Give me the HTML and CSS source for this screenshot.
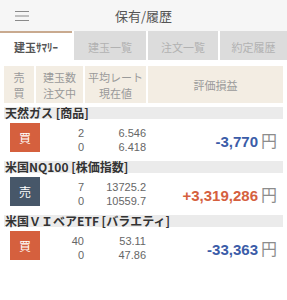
FILE: index.html
```html
<!DOCTYPE html>
<html lang="ja">
<head>
<meta charset="utf-8">
<link rel="stylesheet" href="styles.css">
</head>
<body>
<header class="topbar">
  <svg class="menu" width="14" height="12" viewBox="0 0 14 12"><path d="M0 1.5H14M0 6H14M0 10.5H14" stroke="#8a8a8a" stroke-width="1.2"/></svg>
  <div class="title">保有/履歴</div>
</header>
<nav class="tabs">
  <div class="tab active">建玉ｻﾏﾘｰ</div>
  <div class="tab">建玉一覧</div>
  <div class="tab">注文一覧</div>
  <div class="tab">約定履歴</div>
</nav>
<div class="thead">
  <div class="th">売<br>買</div>
  <div class="th">建玉数<br>注文中</div>
  <div class="th">平均レート<br>現在値</div>
  <div class="th">評価損益</div>
</div>

<div class="label">天然ガス [商品]</div>
<div class="row">
  <div class="side buy">買</div>
  <div class="num"><div>2</div><div>0</div></div>
  <div class="num"><div>6.546</div><div>6.418</div></div>
  <div class="pl minus">-3,770<span class="yen">円</span></div>
</div>

<div class="label">米国NQ100 [株価指数]</div>
<div class="row">
  <div class="side sell">売</div>
  <div class="num"><div>7</div><div>0</div></div>
  <div class="num"><div>13725.2</div><div>10559.7</div></div>
  <div class="pl plus">+3,319,286<span class="yen">円</span></div>
</div>

<div class="label">米国ＶＩベアETF [バラエティ]</div>
<div class="row">
  <div class="side buy">買</div>
  <div class="num"><div>40</div><div>0</div></div>
  <div class="num"><div>53.11</div><div>47.86</div></div>
  <div class="pl minus">-33,363<span class="yen">円</span></div>
</div>
</body>
</html>
```

FILE: styles.css
```css
* { box-sizing: border-box; }
body {
  margin: 0;
  background: #ffffff;
  font-family: "Noto Sans CJK JP", "Noto Sans", sans-serif;
  color: #333;
}
.topbar {
  height: 31px;
  background: #f6f6f6;
  display: flex;
  align-items: center;
  justify-content: center;
  position: relative;
}
.menu {
  position: absolute;
  left: 15px;
  top: 10px;
}
.title {
  font-size: 13px;
  color: #555;
  line-height: 1;
}
.tabs {
  display: grid;
  grid-template-columns: 72px 72px 70px 1fr;
  column-gap: 2px;
  height: 29px;
  background: #fff;
}
.tab {
  background: #dcdcdc;
  color: #b2b2b2;
  font-size: 11px;
  display: flex;
  align-items: center;
  justify-content: center;
  border-top: 2px solid #dcdcdc;
}
.tab.active {
  background: #fff;
  color: #555;
  font-weight: bold;
  border-top-color: #c9aa8f;
}
.thead {
  display: grid;
  grid-template-columns: 30px 47px 61px 1fr;
  column-gap: 2px;
  padding: 0 4px;
  margin-top: 6px;
  height: 37px;
}
.th {
  background: #f3ede3;
  color: #9a9a9a;
  font-size: 11px;
  line-height: 16px;
  display: flex;
  align-items: center;
  justify-content: center;
  text-align: center;
}
.label {
  margin: 4px 4px 0;
  height: 12px;
  background: #ebebeb;
  font-size: 12px;
  font-weight: bold;
  line-height: 12px;
  color: #333;
  padding-left: 1px;
  white-space: nowrap;
}
.label + .row { margin-top: 0; }
.row + .label { margin-top: 0; }
.row {
  height: 42px;
  display: grid;
  grid-template-columns: 30px 44px 62px 1fr;
  padding: 0 10px;
  align-items: center;
}
.side {
  align-self: start;
  margin-top: 4px;
  width: 30px;
  height: 29px;
  color: #fff;
  font-size: 12px;
  display: flex;
  align-items: center;
  justify-content: center;
}
.buy { background: #d5603e; }
.sell { background: #475769; }
.num {
  font-family: "Liberation Sans", Arial, sans-serif;
  font-size: 11px;
  line-height: 14px;
  color: #666;
  text-align: right;
}
.pl {
  font-family: "Liberation Sans", Arial, sans-serif;
  font-size: 15px;
  font-weight: bold;
  text-align: right;
  white-space: nowrap;
}
.minus { color: #3b5ca8; }
.plus { color: #d5603e; }
.yen {
  font-family: "Noto Sans CJK JP", sans-serif;
  font-weight: normal;
  font-size: 16px;
  color: #8c8c8c;
  margin-left: 3px;
}
```
